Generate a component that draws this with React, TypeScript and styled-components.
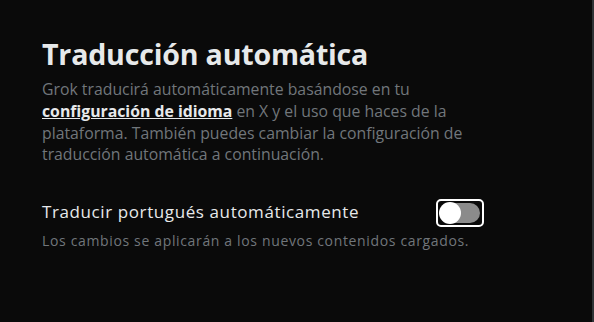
import styled, { createGlobalStyle } from "styled-components"

const GlobalStyle = createGlobalStyle`
html, body {
    margin: 0;
    padding: 0;
    background: #0a0a0a;
}
body {
    font-family: "Open Sans", "Noto Sans", sans-serif;
}
`

const App = () => {
  return (
    <Page>
      <GlobalStyle />
      <Panel>
        <Title>Traducción automática</Title>
        <Description>
          Grok traducirá automáticamente basándose en tu{" "}
          <a href="#">configuración de idioma</a> en X y el uso que haces de la
          plataforma. También puedes cambiar la configuración de traducción
          automática a continuación.
        </Description>

        <Setting>
          <SettingRow>
            <Label>Traducir portugués automáticamente</Label>
            <Toggle aria-label="Traducir portugués automáticamente" $on={false}>
              <span className="track" />
              <span className="knob" />
            </Toggle>
          </SettingRow>
          <Hint>Los cambios se aplicarán a los nuevos contenidos cargados.</Hint>
        </Setting>
      </Panel>
    </Page>
  )
}

const Page = styled.div`
width: 594px;
height: 322px;
box-sizing: border-box;
border-right: 2px solid #2f3336;
background: #0a0a0a;
overflow: hidden;
`

const Panel = styled.div`
width: 472px;
padding: 36px 0 0 42px;
`

const Title = styled.h1`
margin: 0;
font-size: 28.6px;
line-height: 36px;
font-weight: 700;
color: #e7e9ea;
letter-spacing: -0.2px;
`

const Description = styled.p`
margin: 7px 0 0 0;
font-size: 15.8px;
line-height: 21.8px;
color: #71767b;
a {
    color: #e7e9ea;
    font-weight: 700;
    text-decoration: underline;
    text-underline-offset: 1px;
}
`

const Setting = styled.div`
display: flex;
flex-direction: column;
margin-top: 34px;
`

const SettingRow = styled.div`
display: flex;
align-items: flex-start;
justify-content: space-between;
width: 442px;
`

const Label = styled.span`
font-size: 17px;
line-height: 24px;
letter-spacing: 0.6px;
color: #e7e9ea;
white-space: nowrap;
`

const Hint = styled.span`
margin-top: 8px;
font-size: 14px;
line-height: 18px;
letter-spacing: 0.65px;
color: #71767b;
white-space: nowrap;
`

const Toggle = styled.button<{ $on: boolean }>`
position: relative;
flex: none;
width: 48px;
height: 28px;
margin-top: -1px;
margin-bottom: -3px;
padding: 0;
box-sizing: border-box;
border: 2px solid #ffffff;
border-radius: 5px;
background: transparent;
cursor: pointer;
.track {
    position: absolute;
    left: 3px;
    right: 2px;
    top: 2px;
    bottom: 2px;
    border-radius: 10px;
    background: ${(p) => (p.$on ? "#1d9bf0" : "#8b8b8b")};
}
.knob {
    position: absolute;
    top: 1px;
    left: ${(p) => (p.$on ? "24px" : "1px")};
    width: 22px;
    height: 22px;
    border-radius: 50%;
    background: #ffffff;
}
`

export default App
